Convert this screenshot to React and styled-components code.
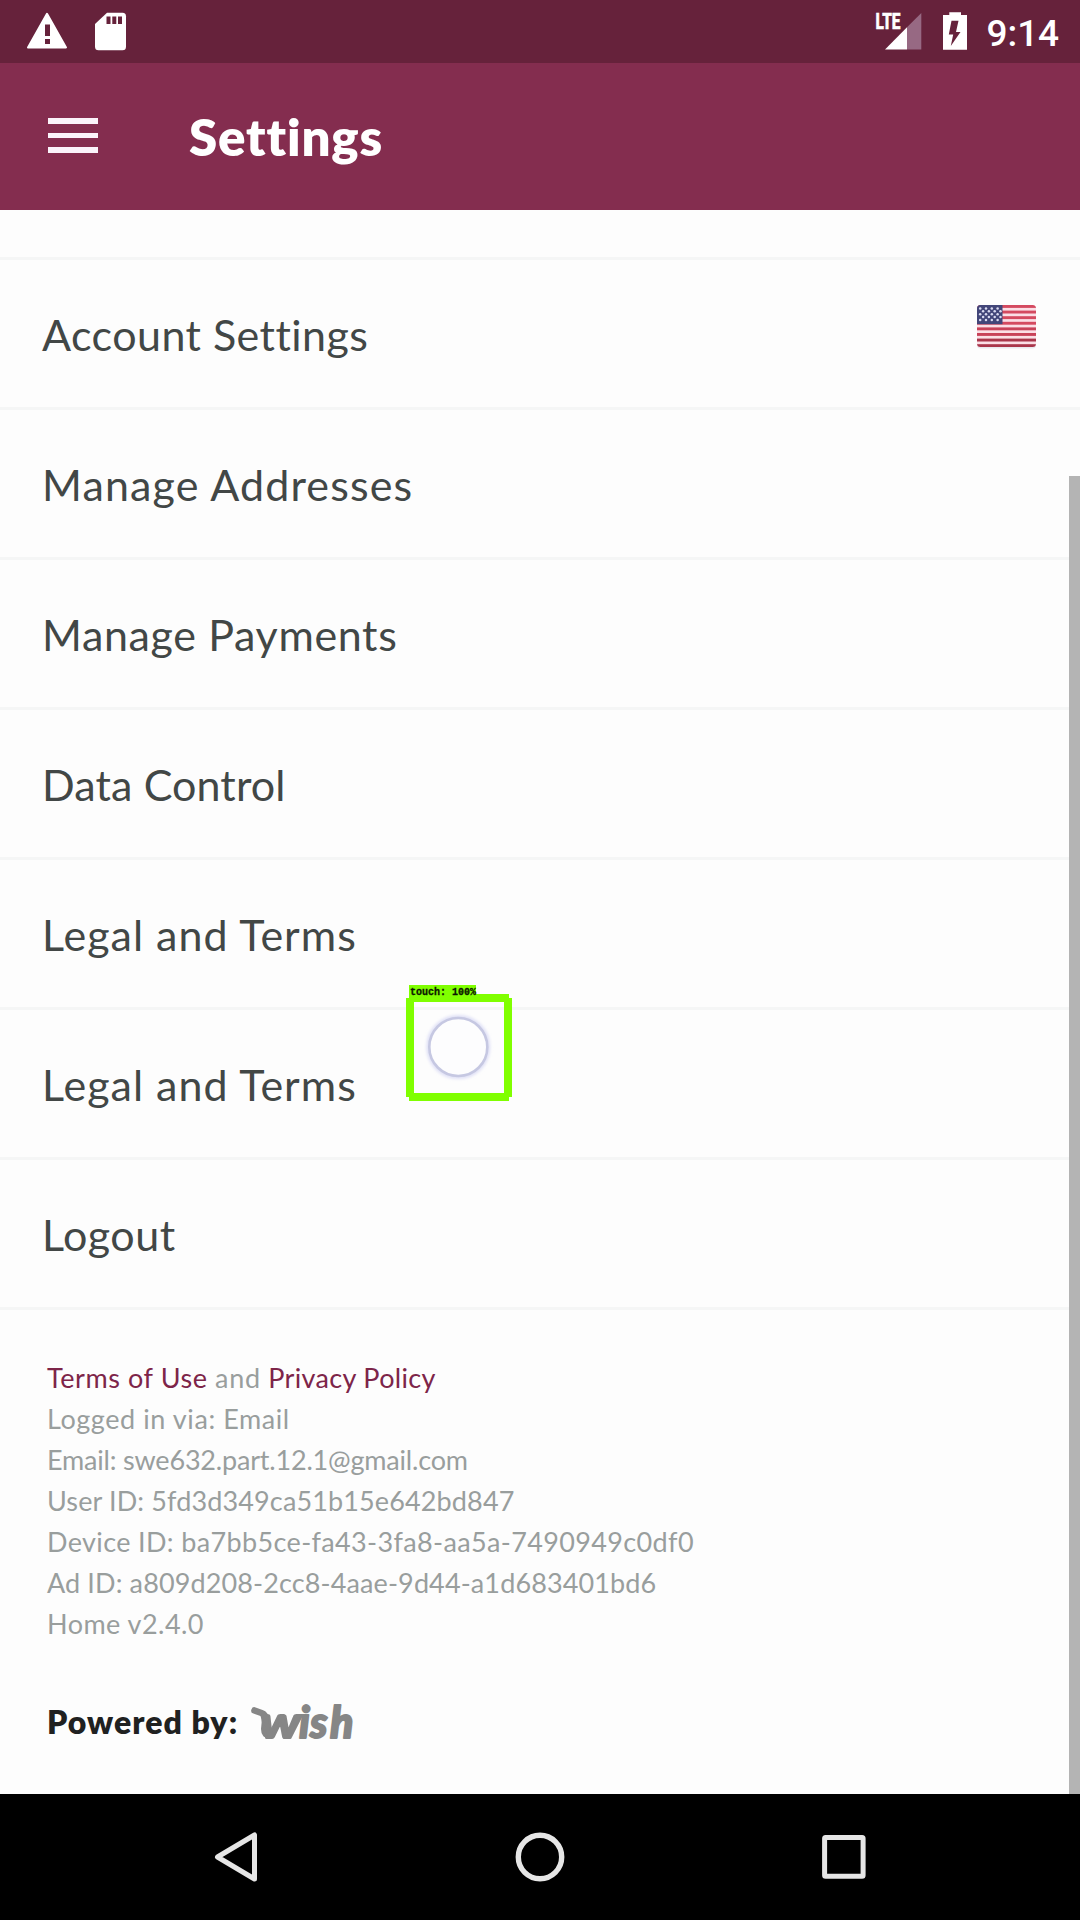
import React from 'react';
import styled, { createGlobalStyle } from 'styled-components';

const GlobalStyle = createGlobalStyle`
  *, *::before, *::after { box-sizing: border-box; }
  body { margin: 0; background: #fdfdfd; }
`;

const Screen = styled.div`
  position: relative;
  display: flex;
  flex-direction: column;
  width: 1080px;
  height: 1920px;
  overflow: hidden;
  background: #fdfdfd;
  font-family: Lato, "Open Sans", sans-serif;
`;

const StatusBar = styled.div`
  display: flex;
  justify-content: space-between;
  height: 63px;
  padding: 0 21px 0 26px;
  background: #66223b;
`;

const StatusGroup = styled.div`
  display: flex;
  align-items: flex-start;
  gap: ${(p) => p.$gap}px;
`;

const Clock = styled.span`
  padding-top: 13px;
  font: 500 37px/42px Roboto, sans-serif;
  letter-spacing: -0.1px;
  color: #fff;
`;

const AppBar = styled.header`
  display: flex;
  align-items: flex-start;
  height: 147px;
  padding: 55px 0 0 48px;
  gap: 91px;
  background: #842d4f;
`;

const MenuButton = styled.button`
  display: flex;
  flex-direction: column;
  gap: 9px;
  width: 50px;
  padding: 0;
  border: 0;
  background: none;
`;

const MenuBar = styled.span`
  height: 5.6px;
  background: #fbf3fa;
`;

const Title = styled.h1`
  margin: -12px 0 0;
  font-size: 51px;
  line-height: 62px;
  font-weight: 800;
  letter-spacing: 0.85px;
  color: #fff;
`;

const Content = styled.main`
  display: flex;
  height: 1584px;
`;

const Page = styled.div`
  flex: 1;
  display: flex;
  flex-direction: column;
  margin-right: -11px;
`;

const ScrollTrack = styled.div`
  display: flex;
  flex-direction: column;
  justify-content: flex-end;
  width: 11px;
  z-index: 1;
`;

const ScrollThumb = styled.div`
  height: 1318px;
  background: #b4b4b4;
`;

const Row = styled.div`
  display: flex;
  justify-content: space-between;
  align-items: flex-start;
  height: ${(p) => p.$height || 150}px;
  padding: 45px 43px 0 42px;
  border-bottom: 3px solid #f5f6f6;
`;

const RowLabel = styled.span`
  margin-top: 5px;
  font-size: 43px;
  line-height: 50px;
  letter-spacing: ${(p) => p.$track}px;
  white-space: nowrap;
  color: #424746;
`;

const Footer = styled.footer`
  display: flex;
  flex-direction: column;
  padding: 47px 0 0 47px;
  color: #999e9d;
`;

const Detail = styled.p`
  margin: 0;
  font-size: 27px;
  line-height: 41px;
  letter-spacing: ${(p) => p.$track}px;
  white-space: pre;
`;

const Link = styled.a`
  color: #7d2549;
  letter-spacing: ${(p) => p.$track}px;
`;

const Powered = styled.div`
  display: flex;
  align-items: flex-start;
  gap: 11px;
  margin-top: 47px;
`;

const PoweredLabel = styled.span`
  margin-top: 12px;
  width: 191px;
  font-size: 32px;
  line-height: 38px;
  font-weight: 800;
  letter-spacing: 1.05px;
  white-space: nowrap;
  color: #202121;
`;

const NavBar = styled.nav`
  display: flex;
  justify-content: space-between;
  align-items: flex-start;
  height: 126px;
  padding: 36px 213px 0;
  background: #000;
`;

const TouchMarker = styled.div`
  position: absolute;
  left: 406px;
  top: 985px;
  width: 106px;
  height: 116px;
`;

const TouchLabel = styled.span`
  position: absolute;
  left: 3px;
  top: 0;
  width: 67px;
  height: 14px;
  padding: 1px 0 0 1px;
  background: #80ff00;
  color: #0c1800;
  font: 700 10px/13px "Liberation Mono", monospace;
  -webkit-text-stroke: 0.3px #0c1800;
  white-space: pre;
`;

const WarningIcon = () => (
  <svg width="42" height="63" viewBox="26 0 42 63">
    <path d="M47 13.8 66 47.5H28z" fill="#fff" stroke="#fff" strokeWidth="2" strokeLinejoin="round" />
    <path d="M45 24.5h5V36h-5zM45 39h5v5h-5z" fill="#66223b" />
  </svg>
);

const SdCardIcon = () => (
  <svg width="32" height="63" viewBox="95 0 32 63">
    <path d="M107 12.7h15.5q3.5 0 3.5 3.5v30.6q0 3.5-3.5 3.5h-24q-3.5 0-3.5-3.5V24z" fill="#fff" />
    <path d="M106.5 16.5h4V24h-4zM112.3 16.5h4V24h-4zM118 16.5h4V24h-4z" fill="#66223b" />
  </svg>
);

const SignalIcon = () => (
  <svg width="48" height="63" viewBox="875 0 48 63">
    <path d="M885 49.5 907 27.3V49.5z" fill="#fff" />
    <path d="M907 27.3 921.3 13V49.5H907z" fill="#976983" />
    <text x="875.5" y="29" textLength="25" lengthAdjust="spacingAndGlyphs" fontFamily="Roboto, sans-serif" fontWeight="800" fontSize="21.5" fill="#fff" stroke="#fff" strokeWidth="0.6">LTE</text>
  </svg>
);

const BatteryIcon = () => (
  <svg width="24" height="63" viewBox="943 0 24 63">
    <path d="M949.3 12.3h11.7V15h6v34.7h-24V15h6.3z" fill="#fff" />
    <path d="M951.5 20.7h7L956 32h4.5l-9.7 14 2.4-11.5h-4.4z" fill="#66223b" />
  </svg>
);

const FlagIcon = () => {
  const stripes = [0, 1, 2, 3, 4, 5, 6, 7];
  const stars = [];
  for (let r = 0; r < 5; r += 1) {
    for (let c = 0; c < 8; c += 1) {
      if ((r + c) % 2 === 0) stars.push([3.2 + c * 2.9, 3.4 + r * 2.9]);
    }
  }
  return (
    <svg width="60" height="44" viewBox="0 0 60 44">
      <clipPath id="flag"><rect width="59" height="42" rx="3.5" /></clipPath>
      <rect y="1" width="59" height="42.5" rx="3.5" fill="#e9e9ee" />
      <g clipPath="url(#flag)">
        <rect width="59" height="42" fill="#fbdfe6" />
        {stripes.map((i) => (
          <rect key={i} y={i * 5.6} width="59" height="2.9" fill={i > 5 ? '#a9364b' : i > 3 ? '#c84259' : '#d44a60'} />
        ))}
        <rect width="25.5" height="19.2" fill="#424679" />
        {stars.map(([x, y]) => <circle key={`${x}-${y}`} cx={x} cy={y} r="1.25" fill="#d9daf0" />)}
      </g>
    </svg>
  );
};

const WishLogo = () => (
  <svg width="116" height="60" viewBox="249 1690 116 60">
    <path d="M254.5 1709.5 261.5 1712q4.3 1.6 3.8 6l-1 10q0 7 6 6.5" fill="none" stroke="#868686" strokeWidth="6.6" strokeLinecap="round" strokeLinejoin="round" />
    <text y="1737" fontFamily="Lato, sans-serif" fontWeight="900" fontStyle="italic" fontSize="43" fill="#868686" stroke="#868686" strokeWidth="1.8" strokeLinejoin="round"><tspan x="260" textLength="41" lengthAdjust="spacingAndGlyphs">w</tspan><tspan x="299 310 330">ish</tspan></text>
  </svg>
);

const BackIcon = () => (
  <svg width="46" height="54" viewBox="213 1830 46 54">
    <path d="M254.5 1835v44L217.5 1857z" fill="none" stroke="#e6e6e6" strokeWidth="5" strokeLinejoin="round" />
  </svg>
);

const HomeIcon = () => (
  <svg width="54" height="54" viewBox="513 1830 54 54">
    <circle cx="540" cy="1857" r="21.7" fill="none" stroke="#e6e6e6" strokeWidth="5.4" />
  </svg>
);

const RecentsIcon = () => (
  <svg width="46" height="54" viewBox="821 1830 46 54">
    <rect x="824.6" y="1837.5" width="38.5" height="38.8" rx="1" fill="none" stroke="#e6e6e6" strokeWidth="5" />
  </svg>
);

const TouchDrawing = () => (
  <svg width="106" height="116" viewBox="406 985 106 116">
    <defs><filter id="glow" x="-20%" y="-20%" width="140%" height="140%"><feGaussianBlur stdDeviation="1.8" /></filter></defs>
    <path d="M409 994h100v8h-100zM409 1093h100v8h-100zM406 998h8v99h-8zM504 998h8v99h-8z" fill="#80ff00" />
    <circle cx="458.3" cy="1047" r="29" fill="none" stroke="#dfe0f6" strokeWidth="6" filter="url(#glow)" />
    <circle cx="458.3" cy="1047" r="29" fill="#fdfdfe" stroke="#c6c8e2" strokeWidth="2.6" />
  </svg>
);

const settings = [
  { label: 'Account Settings', track: 0.45, flag: true },
  { label: 'Manage Addresses', track: 1.13 },
  { label: 'Manage Payments', track: 0.65 },
  { label: 'Data Control', track: 0.12 },
  { label: 'Legal and Terms', track: 1.0 },
  { label: 'Legal and Terms', track: 1.0 },
  { label: 'Logout', track: 0.5 },
];

const details = [
  { text: 'Logged in via: Email', track: 0.58 },
  { text: 'Email: swe632.part.12.1@gmail.com', track: -0.19 },
  { text: 'User ID: 5fd3d349ca51b15e642bd847', track: 0.13 },
  { text: 'Device ID: ba7bb5ce-fa43-3fa8-aa5a-7490949c0df0', track: 0.36 },
  { text: 'Ad ID: a809d208-2cc8-4aae-9d44-a1d683401bd6', track: 0.12 },
  { text: 'Home v2.4.0', track: 0.46 },
];

export default function App() {
  return (
    <Screen>
      <GlobalStyle />
      <StatusBar>
        <StatusGroup $gap={27}>
          <WarningIcon />
          <SdCardIcon />
        </StatusGroup>
        <StatusGroup $gap={20}>
          <SignalIcon />
          <BatteryIcon />
          <Clock>9:14</Clock>
        </StatusGroup>
      </StatusBar>
      <AppBar>
        <MenuButton aria-label="Menu">
          <MenuBar />
          <MenuBar />
          <MenuBar />
        </MenuButton>
        <Title>Settings</Title>
      </AppBar>
      <Content>
        <Page>
          <Row $height={50} />
          {settings.map((item, i) => (
            <Row key={i}>
              <RowLabel $track={item.track}>{item.label}</RowLabel>
              {item.flag && <FlagIcon />}
            </Row>
          ))}
          <Footer>
            <Detail $track={0.65}>
              <Link $track={0.58}>Terms of Use</Link> and <Link $track={0.34}>Privacy Policy</Link>
            </Detail>
            {details.map((d) => <Detail key={d.text} $track={d.track}>{d.text}</Detail>)}
            <Powered>
              <PoweredLabel>Powered by:</PoweredLabel>
              <WishLogo />
            </Powered>
          </Footer>
        </Page>
        <ScrollTrack><ScrollThumb /></ScrollTrack>
      </Content>
      <NavBar>
        <BackIcon />
        <HomeIcon />
        <RecentsIcon />
      </NavBar>
      <TouchMarker>
        <TouchDrawing />
        <TouchLabel>touch: 100%</TouchLabel>
      </TouchMarker>
    </Screen>
  );
}
